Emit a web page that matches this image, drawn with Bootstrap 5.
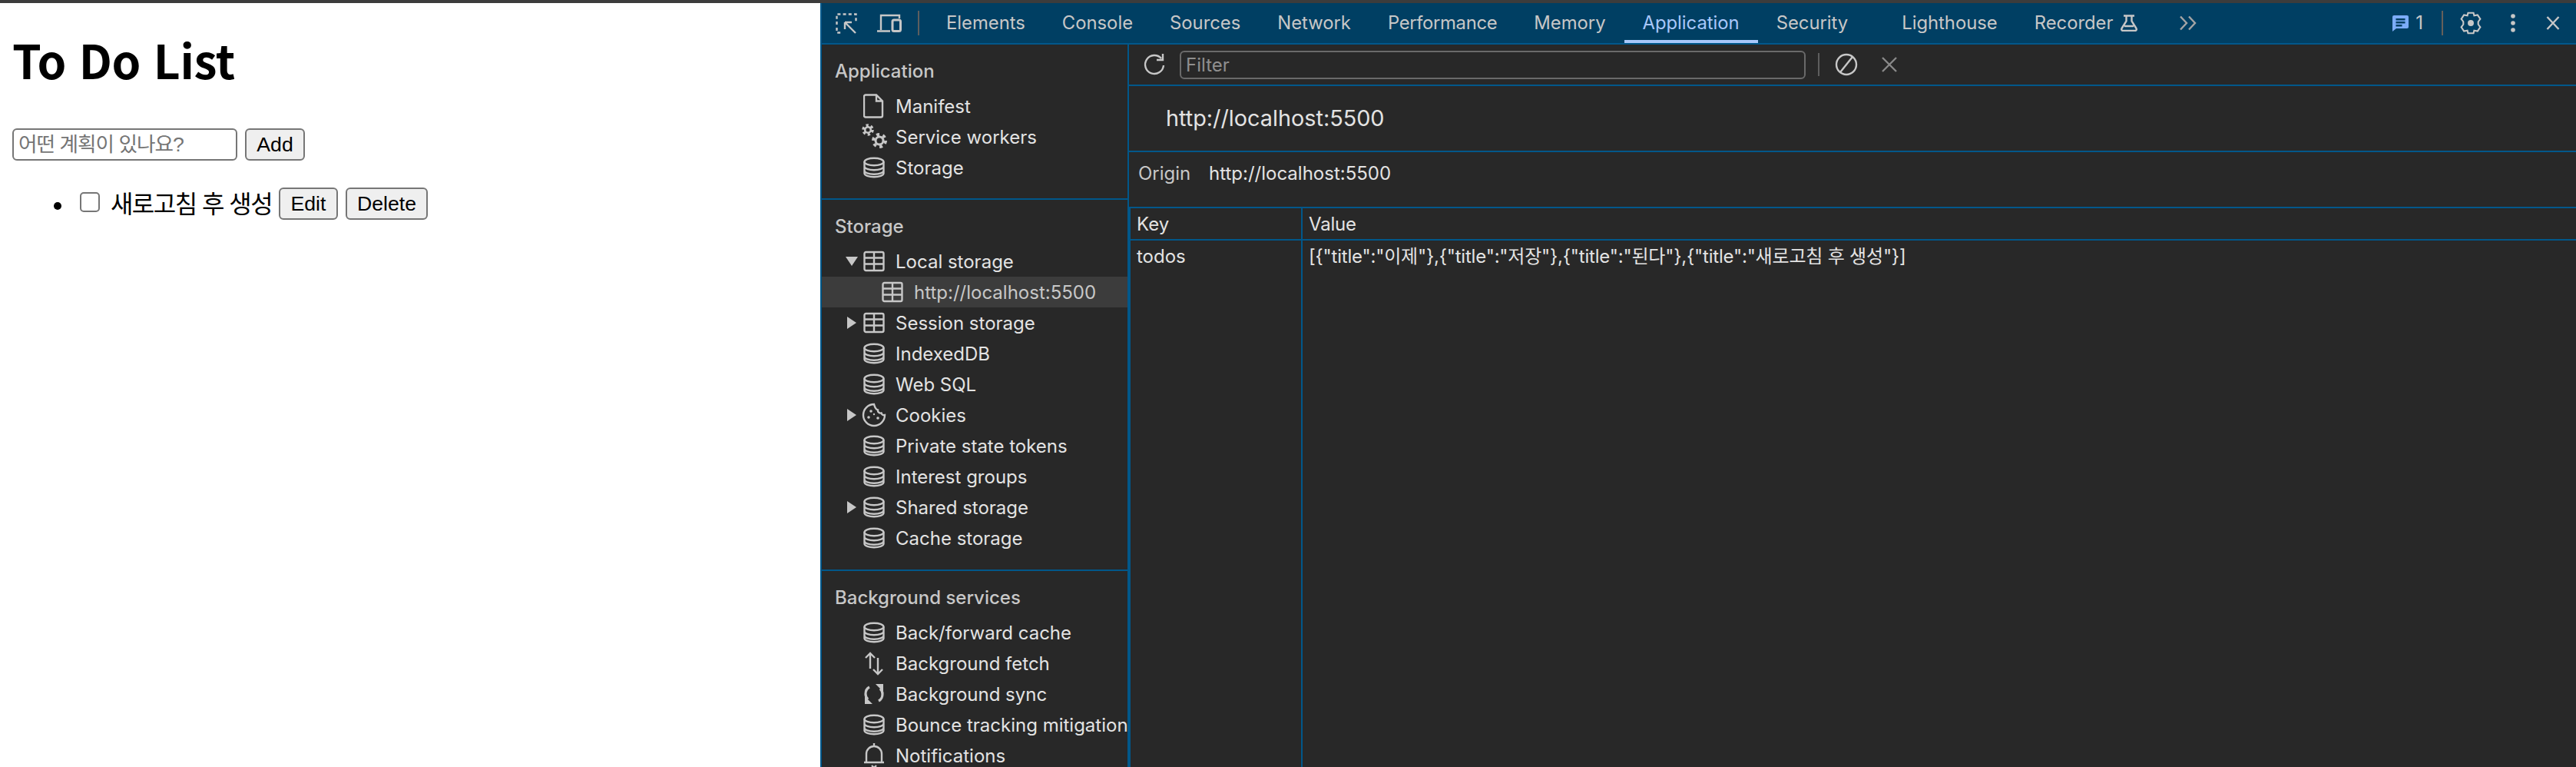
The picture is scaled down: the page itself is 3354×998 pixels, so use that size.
<!DOCTYPE html>
<html lang="ko">
<head>
<meta charset="utf-8">
<title>To Do List</title>
<link rel="stylesheet" href="https://cdn.jsdelivr.net/npm/bootstrap@5.3.0/dist/css/bootstrap.min.css">
<style>
html,body{height:998px;overflow:hidden;background:#fff}
body{font-family:"Inter","Noto Sans CJK KR",sans-serif}
.topstrip{height:4px;background:#3c3c3c}
.shell{height:994px}
.todo-page{width:1068px;padding-left:16px;color:#000}
.todo-title{font:700 60.5px/1 "Noto Sans CJK KR",sans-serif;margin:43px 0 0;letter-spacing:-.3px}
.todo-form{margin-top:59.5px}
.nat-input{width:293px;height:42px;border:2px solid #767676;border-radius:6px;background:#fff;padding:0 6px;font:26.67px "Liberation Sans","Noto Sans CJK KR",sans-serif;letter-spacing:-1px}
.nat-input::placeholder{color:#757575;opacity:1}
.nat-btn{height:42px;border:2px solid #767676;border-radius:6px;background:#efefef;color:#000;padding:0 13.3px;font:26.67px "Liberation Sans",sans-serif;margin-left:10px}
.todo-items{list-style:disc;padding-left:80px;margin:35px 0 0;font:32px/42px "Liberation Sans","Noto Sans CJK KR",sans-serif}
.todo-items .nat-btn{vertical-align:3px}
.todo-check{width:26px;height:26px;margin:0 6px 0 8px;vertical-align:1px;appearance:none;border:2px solid #767676;border-radius:5px;background:#fff}
.todo-label{letter-spacing:-1.5px;margin-left:-1px}
.dev{background:#282828;border-left:2px solid #00578a;color:#e3e3e3;font-size:24px;min-width:0}
.dev-top{height:54px;background:#003f63;border-bottom:2px solid #00578a;color:#c7c7c7;flex:none}
.ico{flex:none;display:block;fill:none;stroke:#c7c7c7;stroke-width:2.4}
.ico-fill{fill:#c7c7c7;stroke:none}
.tab-item{height:52px;padding:0 24px;line-height:52px;white-space:nowrap;font-size:23.8px}
.tab-tight{letter-spacing:-.3px}
.tab-on{color:#a8c7fa;border-bottom:4px solid #a8c7fa}
.tool-sep{width:2px;height:32px;background:#5e5e5e}
.dev-body{min-height:0}
.side{width:400px;border-right:2px solid #00578a;flex:none;overflow:hidden}
.side-sec{border-bottom:2px solid #00578a;padding-top:12px}
.sec-a{height:202px}
.sec-b{height:483px}
.sec-c{border-bottom:0}
.side-head{height:48px;line-height:46px;padding-left:17px;font-weight:500;color:#c7c7c7;white-space:nowrap}
.tree-row{height:40px;white-space:nowrap;padding-left:33px;padding-top:2px}
.tree-row .ico,.tree-row .tree-arrow{margin-top:-2px}
.tree-sub{padding-left:78px;background:#3c3c3c;color:#c7c7c7}
.tree-arrow{width:21px;flex:none;display:block}
.tree-arrow svg{display:block}
.tree-down{margin-left:-2px}
.tree-ico{margin-right:14px}
.indent-none{margin-left:21px}
.main-pane{min-width:0}
.filter-row{height:54px;border-bottom:2px solid #00578a;flex:none;padding-left:17px}
.filter-box{width:815px;height:37px;border:2px solid #6a6a6a;border-radius:6px;background:#282828;color:#e3e3e3;padding:0 6px;font-size:24px;margin-left:19px}
.filter-box::placeholder{color:#8f8f8f;opacity:1}
.title-row{height:86px;line-height:83px;padding-left:48px;border-bottom:2px solid #00578a;font-size:28.8px;color:#e3e3e3;flex:none}
.origin-row{height:73px;line-height:56px;border-bottom:2px solid #00578a;padding-left:12px;flex:none;color:#e3e3e3}
.origin-label{width:92px;color:#c7c7c7}
.kv-wrap{border-left:2px solid #00578a}
.kv-head{height:42px;border-bottom:2px solid #00578a;flex:none}
.kv-key{width:224px;border-right:2px solid #00578a;padding-left:8px;flex:none;line-height:41px}
.kv-val{padding-left:8px;line-height:41px;white-space:nowrap;letter-spacing:-.2px}
.kv-fill{min-height:0}
</style>
</head>
<body>
<svg width="0" height="0" class="d-block">
<defs>
<symbol id="i-db" viewBox="0 0 28 28"><ellipse cx="14" cy="6.500" rx="12.500" ry="4.800"/><path d="M1.500 6.500v15c0 2.700 5.600 4.800 12.500 4.800s12.500-2.100 12.500-4.800v-15M1.500 12.500c0 2.700 5.600 4.800 12.500 4.800s12.500-2.100 12.500-4.800M1.500 18c0 2.700 5.600 4.800 12.500 4.800s12.500-2.100 12.500-4.800"/></symbol>
<symbol id="i-tbl" viewBox="0 0 28 28"><rect x="1.500" y="2" width="25" height="24" rx="2"/><path d="M1.500 9.500h25M1.500 17.500h25M14 2v24"/></symbol>
<symbol id="i-file" viewBox="0 0 28 32"><path d="M3 1.500h14l8 8v19a2 2 0 0 1-2 2H3a2 2 0 0 1-2-2v-25a2 2 0 0 1 2-2zM17 1.500v8h8"/></symbol>
<symbol id="i-gears" viewBox="0 0 34 34"><circle cx="8" cy="8" r="6" stroke-width="3.500" stroke-dasharray="3.200 3.080"/><circle cx="8" cy="8" r="3.800" stroke-width="2.600"/><circle cx="23" cy="22" r="8" stroke-width="4" stroke-dasharray="4 4.380"/><circle cx="23" cy="22" r="5" stroke-width="3"/></symbol>
<symbol id="i-cookie" viewBox="0 0 32 32"><path d="M16 2a14 14 0 1 0 14 14c-2 .5-4-.5-4.500-2.500C23 14 20.500 12 21 9.500 18.500 9 17 6 16 2z"/><g class="ico-fill"><circle cx="12" cy="11" r="1.800"/><circle cx="9" cy="19" r="1.800"/><circle cx="21" cy="20" r="1.800"/><circle cx="16" cy="15" r="1.200"/></g></symbol>
<symbol id="i-arrows" viewBox="0 0 28 32"><path d="M9 23V3M3 9l6-6 6 6M19 9v21M13 24l6 6 6-6"/></symbol>
<symbol id="i-sync" viewBox="0 0 28 28"><path stroke-width="3.200" d="M8 5C4 7 3 11 3 14c0 3 1 5 3 7M20 23c4-2 5-6 5-9 0-3-1-5-3-7"/><path class="ico-fill" d="M2 17l10 10H2zM26 11L16 1h10z"/></symbol>
<symbol id="i-bell" viewBox="0 0 28 34"><path d="M4 25V15a10 10 0 0 1 20 0v10M1 26h26M14 5V1M11 30l3 3 3-3"/></symbol>
</defs>
</svg>
<div class="topstrip"></div>
<div class="shell d-flex">
  <div class="todo-page flex-shrink-0">
    <h1 class="todo-title">To Do List</h1>
    <div class="todo-form d-flex align-items-center">
      <input class="nat-input" type="text" placeholder="어떤 계획이 있나요?">
      <button class="nat-btn" type="button">Add</button>
    </div>
    <ul class="todo-items">
      <li><input class="todo-check" type="checkbox"> <span class="todo-label">새로고침 후 생성</span> <button class="nat-btn ms-0" type="button">Edit</button><button class="nat-btn" type="button">Delete</button></li>
    </ul>
  </div>
  <div class="dev flex-grow-1 d-flex flex-column">
    <div class="dev-top d-flex align-items-center">
      <svg class="ico" style="margin-left:18px" width="28" height="27" viewBox="0 0 28 27"><path stroke-dasharray="4 3.200" d="M1.500 15V1.500h25v9M1.500 19v6.500h5"/><path d="M12 12l14 14M12 12h9M12 12v9"/></svg>
      <svg class="ico" style="margin-left:26px" width="32" height="24" viewBox="0 0 32 24"><path d="M5 21V2h24v4M0 22.500h17"/><rect x="20" y="8" width="10.500" height="14.500" rx="2" stroke-width="3"/></svg>
      <span class="tool-sep" style="margin-left:21px"></span>
      <div class="d-flex" style="margin-left:11px">
        <span class="tab-item">Elements</span><span class="tab-item">Console</span><span class="tab-item">Sources</span><span class="tab-item">Network</span><span class="tab-item tab-tight">Performance</span><span class="tab-item">Memory</span><span class="tab-item tab-on">Application</span><span class="tab-item">Security</span><span class="tab-item" style="margin-left:22px">Lighthouse</span><span class="tab-item d-flex align-items-center pe-0">Recorder<svg class="ico" style="margin-left:10px" width="22" height="22" viewBox="0 0 22 22"><path d="M4 1.500h14M7.500 1.500v7L1.500 18a2 2 0 0 0 2 3h15a2 2 0 0 0 2-3l-6-9.500v-7M5 15h12"/></svg></span>
      </div>
      <svg class="ico" style="margin-left:54px;stroke:#a5a5a5" width="24" height="20" viewBox="0 0 24 20"><path d="M2 1.500l8 8.500-8 8.500M13 1.500l8 8.500-8 8.500"/></svg>
      <div class="ms-auto d-flex align-items-center">
        <svg class="ico" style="stroke:none" width="21" height="21" viewBox="0 0 21 21"><path fill="#7cacf8" d="M2 0h17a2 2 0 0 1 2 2v13a2 2 0 0 1-2 2H5l-5 4V2a2 2 0 0 1 2-2z"/><path fill="#003f63" d="M4.500 4h12v2.400h-12zM4.500 8h12v2.400h-12zM4.500 12h8v2.400h-8z"/></svg>
        <span style="margin-left:9px">1</span>
        <span class="tool-sep" style="margin-left:24px;background:#66605a"></span>
        <svg class="ico" style="margin-left:21px" width="30" height="30" viewBox="0 0 30 34"><path d="M11 2h8l1 4 5-1 4 6-3 4v4l3 4-4 6-5-1-1 4h-8l-1-4-5 1-4-6 3-4v-4l-3-4 4-6 5 1z"/><circle class="ico-fill" cx="15" cy="17" r="4.500"/></svg>
        <svg class="ico ico-fill" style="margin-left:36px" width="8" height="24" viewBox="0 0 8 24"><circle cx="4" cy="3" r="2.800"/><circle cx="4" cy="12" r="2.800"/><circle cx="4" cy="21" r="2.800"/></svg>
        <svg class="ico" style="margin-left:39px;margin-right:21px" width="18" height="18" viewBox="0 0 18 18"><path d="M1.500 1l15 16M16.500 1l-15 16"/></svg>
      </div>
    </div>
    <div class="dev-body flex-grow-1 d-flex">
      <div class="side">
        <div class="side-sec sec-a">
          <div class="side-head">Application</div>
          <div class="tree-row d-flex align-items-center"><span class="indent-none"></span><svg class="ico tree-ico" width="28" height="32"><use href="#i-file"/></svg>Manifest</div>
          <div class="tree-row d-flex align-items-center"><span class="indent-none"></span><svg class="ico tree-ico" style="margin-left:-2px;margin-right:10px" width="34" height="34"><use href="#i-gears"/></svg>Service workers</div>
          <div class="tree-row d-flex align-items-center"><span class="indent-none"></span><svg class="ico tree-ico" width="28" height="28"><use href="#i-db"/></svg>Storage</div>
        </div>
        <div class="side-sec sec-b">
          <div class="side-head">Storage</div>
          <div class="tree-row d-flex align-items-center"><span class="tree-arrow"><svg class="ico-fill tree-down" width="16" height="12" viewBox="0 0 16 12"><path d="M0 0h16L8 12z"/></svg></span><svg class="ico tree-ico" width="28" height="28"><use href="#i-tbl"/></svg>Local storage</div>
          <div class="tree-row tree-sub d-flex align-items-center"><svg class="ico tree-ico" width="28" height="28"><use href="#i-tbl"/></svg>http://localhost:5500</div>
          <div class="tree-row d-flex align-items-center"><span class="tree-arrow"><svg class="ico-fill" width="12" height="16" viewBox="0 0 12 16"><path d="M0 0l12 8-12 8z"/></svg></span><svg class="ico tree-ico" width="28" height="28"><use href="#i-tbl"/></svg>Session storage</div>
          <div class="tree-row d-flex align-items-center"><span class="indent-none"></span><svg class="ico tree-ico" width="28" height="28"><use href="#i-db"/></svg>IndexedDB</div>
          <div class="tree-row d-flex align-items-center"><span class="indent-none"></span><svg class="ico tree-ico" width="28" height="28"><use href="#i-db"/></svg>Web SQL</div>
          <div class="tree-row d-flex align-items-center"><span class="tree-arrow"><svg class="ico-fill" width="12" height="16" viewBox="0 0 12 16"><path d="M0 0l12 8-12 8z"/></svg></span><svg class="ico tree-ico" style="margin-left:-2px;margin-right:12px" width="32" height="32"><use href="#i-cookie"/></svg>Cookies</div>
          <div class="tree-row d-flex align-items-center"><span class="indent-none"></span><svg class="ico tree-ico" width="28" height="28"><use href="#i-db"/></svg>Private state tokens</div>
          <div class="tree-row d-flex align-items-center"><span class="indent-none"></span><svg class="ico tree-ico" width="28" height="28"><use href="#i-db"/></svg>Interest groups</div>
          <div class="tree-row d-flex align-items-center"><span class="tree-arrow"><svg class="ico-fill" width="12" height="16" viewBox="0 0 12 16"><path d="M0 0l12 8-12 8z"/></svg></span><svg class="ico tree-ico" width="28" height="28"><use href="#i-db"/></svg>Shared storage</div>
          <div class="tree-row d-flex align-items-center"><span class="indent-none"></span><svg class="ico tree-ico" width="28" height="28"><use href="#i-db"/></svg>Cache storage</div>
        </div>
        <div class="side-sec sec-c">
          <div class="side-head">Background services</div>
          <div class="tree-row d-flex align-items-center"><span class="indent-none"></span><svg class="ico tree-ico" width="28" height="28"><use href="#i-db"/></svg>Back/forward cache</div>
          <div class="tree-row d-flex align-items-center"><span class="indent-none"></span><svg class="ico tree-ico" width="28" height="32"><use href="#i-arrows"/></svg>Background fetch</div>
          <div class="tree-row d-flex align-items-center"><span class="indent-none"></span><svg class="ico tree-ico" width="28" height="28"><use href="#i-sync"/></svg>Background sync</div>
          <div class="tree-row d-flex align-items-center"><span class="indent-none"></span><svg class="ico tree-ico" width="28" height="28"><use href="#i-db"/></svg>Bounce tracking mitigation</div>
          <div class="tree-row d-flex align-items-center"><span class="indent-none"></span><svg class="ico tree-ico" width="28" height="34"><use href="#i-bell"/></svg>Notifications</div>
        </div>
      </div>
      <div class="main-pane flex-grow-1 d-flex flex-column">
        <div class="filter-row d-flex align-items-center">
          <svg class="ico" width="30" height="32" viewBox="0 0 30 32"><path d="M25 8a12 12 0 1 0 3 9M27 2v8h-8"/></svg>
          <input class="filter-box" type="text" placeholder="Filter">
          <span class="tool-sep" style="margin-left:16px;height:30px"></span>
          <svg class="ico" style="margin-left:20px" width="30" height="30" viewBox="0 0 30 30"><circle cx="15" cy="15" r="13"/><path d="M7 25L23 5"/></svg>
          <svg class="ico" style="margin-left:30px;stroke:#8a8a8a" width="22" height="20" viewBox="0 0 22 20"><path d="M2 1l18 18M20 1L2 19"/></svg>
        </div>
        <div class="title-row">http://localhost:5500</div>
        <div class="origin-row d-flex"><span class="origin-label">Origin</span><span>http://localhost:5500</span></div>
        <div class="kv-wrap flex-grow-1 d-flex flex-column">
          <div class="kv-head d-flex"><div class="kv-key">Key</div><div class="kv-val">Value</div></div>
          <div class="kv-fill flex-grow-1 d-flex"><div class="kv-key">todos</div><div class="kv-val">[{"title":"이제"},{"title":"저장"},{"title":"된다"},{"title":"새로고침 후 생성"}]</div></div>
        </div>
      </div>
    </div>
  </div>
</div>
</body>
</html>
